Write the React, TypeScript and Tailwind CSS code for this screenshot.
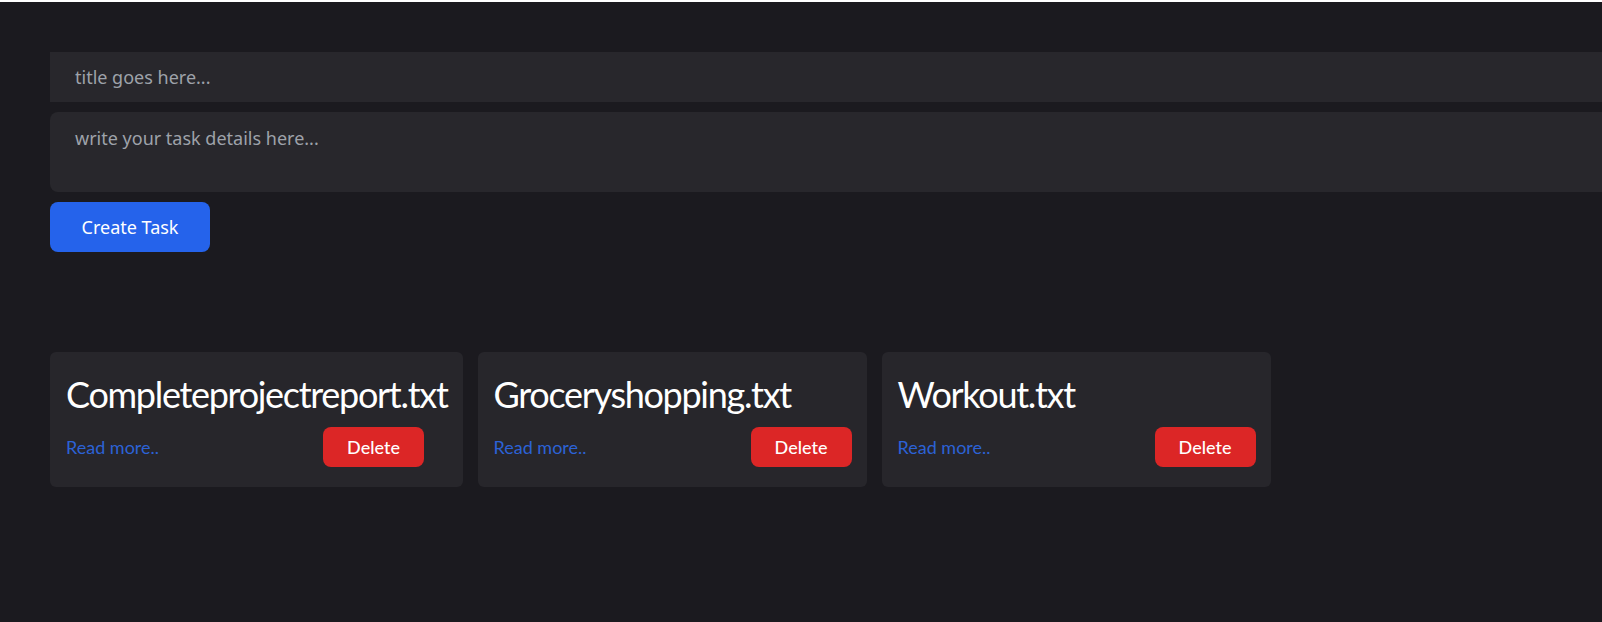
import { useState } from "react";

type Task = {
  id: number;
  title: string;
};

const initialTasks: Task[] = [
  { id: 1, title: "Completeprojectreport.txt" },
  { id: 2, title: "Groceryshopping.txt" },
  { id: 3, title: "Workout.txt" },
];

export default function App() {
  const [title, setTitle] = useState("");
  const [details, setDetails] = useState("");
  const [tasks, setTasks] = useState<Task[]>(initialTasks);

  const createTask = () => {
    if (!title.trim()) return;
    setTasks((prev) => [...prev, { id: Date.now(), title: title.trim() }]);
    setTitle("");
    setDetails("");
  };

  return (
    <div className="min-h-screen overflow-hidden bg-[#1b1a1f] font-['Noto_Sans',sans-serif]">
      <div className="h-[2px] bg-white" />
      <div className="pl-[50px] pt-[50px]">
        <div className="flex flex-col gap-[10px]">
          <input
            value={title}
            onChange={(event) => setTitle(event.target.value)}
            placeholder="title goes here..."
            className="h-[50px] w-[calc(100%+16px)] bg-[#28272c] pl-[25px] text-[18px] text-white placeholder-[#9ea2aa] outline-none"
          />
          <textarea
            autoFocus
            value={details}
            onChange={(event) => setDetails(event.target.value)}
            placeholder="write your task details here..."
            className="h-[80px] w-[calc(100%+16px)] resize-none rounded-lg bg-[#28272c] pl-[25px] pt-3 text-[18px] leading-7 text-white placeholder-[#9ea2aa] caret-white outline-none"
          />
          <div>
            <button
              onClick={createTask}
              className="h-[50px] w-[160px] rounded-lg bg-[#2563eb] text-[18px] text-white"
            >
              Create Task
            </button>
          </div>
        </div>

        <div className="mt-[100px] flex items-start gap-[15px] font-['Lato',sans-serif]">
          {tasks.map((task) => (
            <div key={task.id} className="min-w-[388px] shrink-0 rounded-md bg-[#27262b] pb-5 pl-4 pr-[15px] pt-5">
              <h3 className="whitespace-nowrap text-[36px] leading-[45px] tracking-[-1.3px] text-white">
                {task.title}
              </h3>
              <div className="mt-[10px] flex w-[358px] items-center justify-between">
                <a href="#" className="text-[18px] text-[#2c62d6]">
                  Read more..
                </a>
                <button
                  onClick={() => setTasks((prev) => prev.filter((t) => t.id !== task.id))}
                  className="h-10 w-[101px] rounded-lg bg-[#dc2626] text-[18px] font-medium text-white"
                >
                  Delete
                </button>
              </div>
            </div>
          ))}
        </div>
      </div>
    </div>
  );
}
